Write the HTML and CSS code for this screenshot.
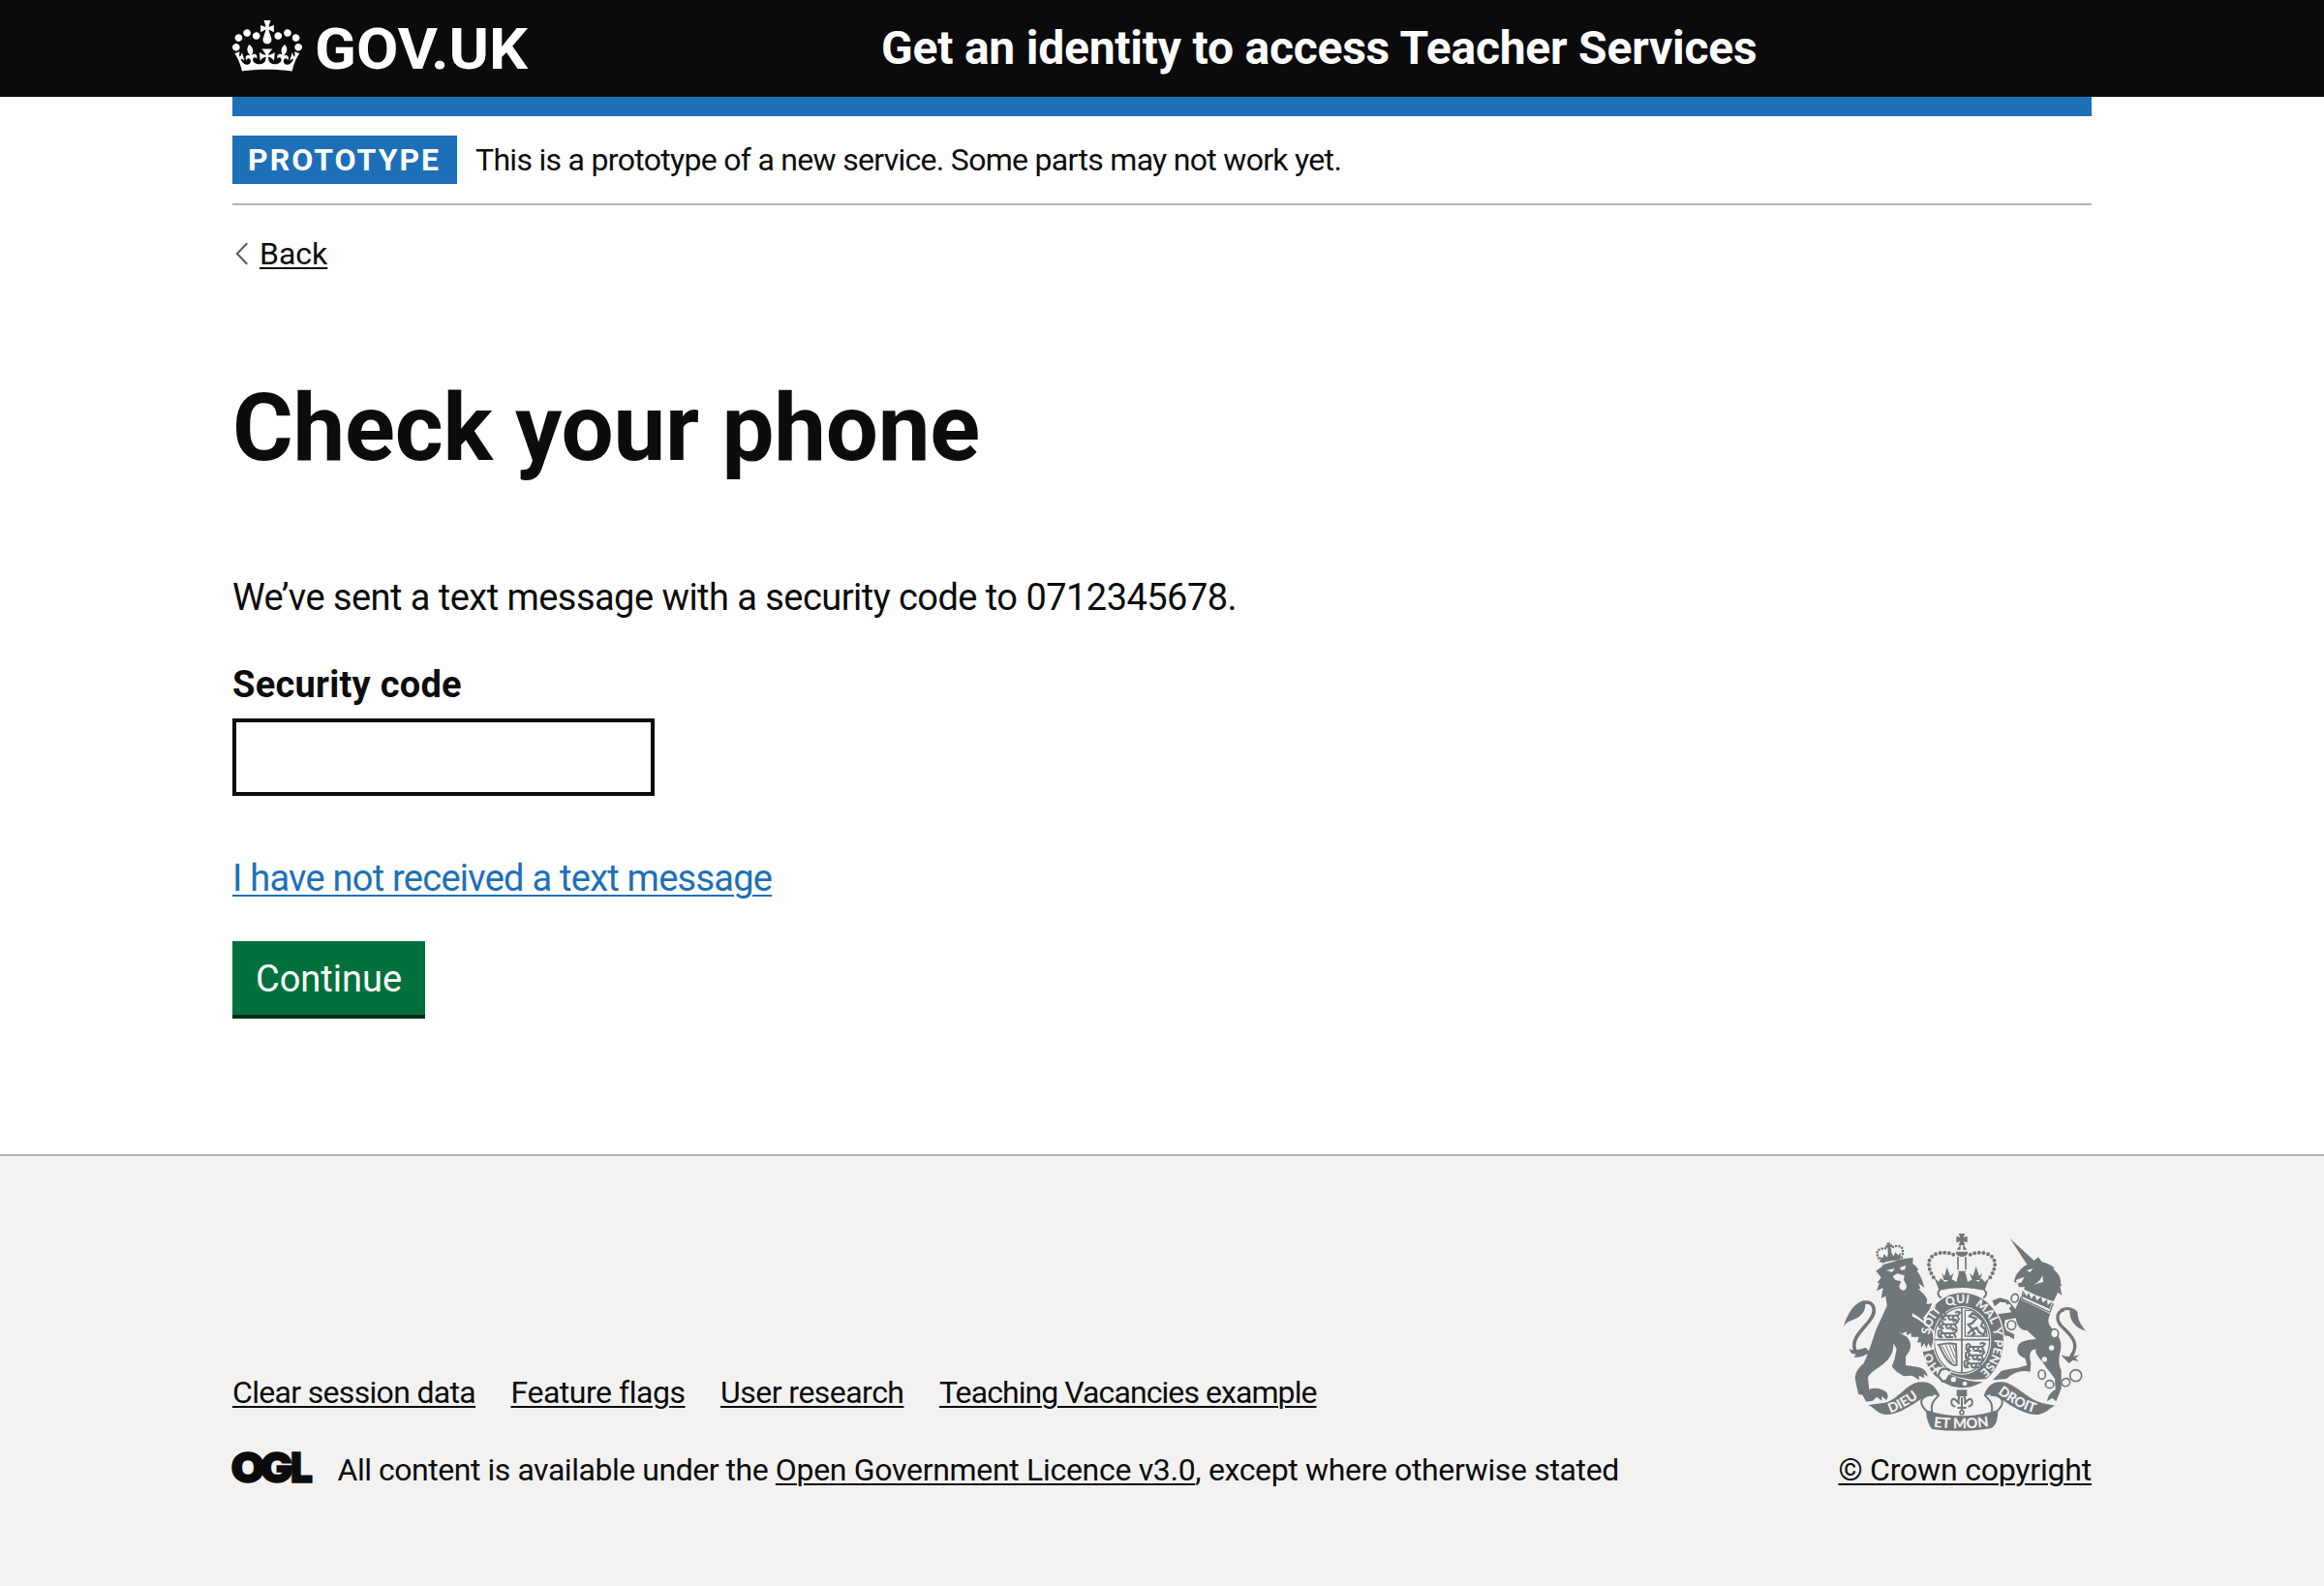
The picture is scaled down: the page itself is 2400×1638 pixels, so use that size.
FILE: index.html
```html
<!DOCTYPE html>
<html lang="en">
<head>
<meta charset="utf-8">
<title>Check your phone - Get an identity to access Teacher Services</title>
<link rel="stylesheet" href="styles.css">
</head>
<body>
<header class="header">
  <div class="container header-row">
    <a class="logo" href="#" aria-label="GOV.UK">
      <svg class="logo-crown" viewBox="0 0 132 97" width="72" height="53"><path fill="currentColor" fill-rule="evenodd" d="M25 30.2c3.5 1.5 7.7-.2 9.1-3.7 1.5-3.6-.2-7.8-3.9-9.2-3.6-1.4-7.6.3-9.1 3.9-1.4 3.5.3 7.5 3.9 9zM9 39.5c3.6 1.5 7.8-.2 9.2-3.7 1.5-3.6-.2-7.8-3.9-9.1-3.6-1.5-7.6.2-9.1 3.8-1.4 3.5.3 7.5 3.8 9zM4.4 57.2c3.5 1.5 7.7-.2 9.1-3.8 1.5-3.6-.2-7.7-3.9-9.1-3.5-1.5-7.6.3-9.1 3.8-1.4 3.5.3 7.6 3.9 9.1zm38.3-21.4c3.5 1.5 7.7-.2 9.1-3.8 1.5-3.6-.2-7.7-3.9-9.1-3.6-1.5-7.6.3-9.1 3.8-1.3 3.6.4 7.7 3.9 9.1zm64.4-5.6c-3.6 1.5-7.8-.2-9.1-3.7-1.5-3.6.2-7.8 3.8-9.2 3.6-1.4 7.7.3 9.2 3.9 1.3 3.5-.4 7.5-3.9 9zm15.9 9.3c-3.6 1.5-7.7-.2-9.1-3.7-1.5-3.6.2-7.8 3.7-9.1 3.6-1.5 7.7.2 9.2 3.8 1.5 3.5-.3 7.5-3.8 9zm4.7 17.7c-3.6 1.5-7.8-.2-9.2-3.8-1.5-3.6.2-7.7 3.9-9.1 3.6-1.5 7.7.3 9.2 3.8 1.3 3.5-.4 7.6-3.9 9.1zM89.3 35.8c-3.6 1.5-7.8-.2-9.2-3.8-1.4-3.6.2-7.7 3.9-9.1 3.6-1.5 7.7.3 9.2 3.8 1.4 3.6-.3 7.7-3.9 9.1zM69.7 17.7l8.9 4.7V9.3l-8.9 2.8c-.2-.3-.5-.6-.9-.9L72.4 0H59.6l3.5 11.2c-.3.3-.6.5-.9.9l-8.8-2.8v13.1l8.8-4.7c.3.3.6.7.9.9l-5 15.4v.1c-.2.8-.4 1.6-.4 2.4 0 4.1 3.1 7.5 7 8.1h.2c.3 0 .7.1 1 .1.4 0 .7 0 1-.1h.2c4-.6 7.1-4.1 7.1-8.1 0-.8-.1-1.7-.4-2.4V34l-5.1-15.4c.4-.2.7-.6 1-.9zM66 92.8c16.9 0 32.8 1.1 47.1 3.2 4-16.9 8.9-26.7 14-33.5l-9.6-3.4c1 4.9 1.1 7.2 0 10.2-1.5-1.4-3-4.3-4.2-8.7L108.6 76c2.8-2 5-3.2 7.5-3.3-4.4 9.4-10 11.9-13.6 11.2-4.3-.8-6.3-4.6-5.6-7.9 1-4.7 5.7-5.9 8-.5 4.3-8.7-3-11.4-7.6-8.8 7.1-7.2 7.9-13.5 2.1-21.1-8 6.1-8.1 12.3-4.5 20.8-4.7-5.4-12.1-2.5-9.5 6.2 3.4-5.2 7.9-2 7.2 3.1-.6 4.3-6.4 7.8-13.5 7.2-10.3-.9-10.9-8-11.2-13.8 2.5-.5 7.1 1.8 11 7.3L80.2 60c-4.1 4.4-8 5.3-12.3 5.4 1.4-4.4 8-11.6 8-11.6H55.5s6.4 7.2 7.9 11.6c-4.2-.1-8-1-12.3-5.4l1.4 16.4c3.9-5.5 8.5-7.7 10.9-7.3-.3 5.8-.9 12.8-11.1 13.8-7.2.6-12.9-2.9-13.5-7.2-.7-5 3.8-8.3 7.1-3.1 2.7-8.7-4.6-11.6-9.4-6.2 3.7-8.5 3.6-14.7-4.6-20.8-5.8 7.6-5 13.9 2.2 21.1-4.7-2.6-11.9.1-7.7 8.8 2.3-5.5 7.1-4.2 8.1.5.7 3.3-1.3 7.1-5.7 7.9-3.5.7-9-1.8-13.5-11.2 2.5.1 4.7 1.3 7.5 3.3l-4.7-15.4c-1.2 4.4-2.7 7.2-4.3 8.7-1.1-3-.9-5.3 0-10.2l-9.5 3.4c5 6.9 9.9 16.7 14 33.5 14.8-2.1 30.8-3.2 47.7-3.2z"/></svg>
      <svg class="logo-word" viewBox="0 0 230 79" width="230" height="79"><text x="1" y="51" textLength="220" lengthAdjust="spacingAndGlyphs">GOV.UK</text></svg>
    </a>
    <a class="service-name" href="#">Get an identity to access Teacher Services</a>
  </div>
</header>
<div class="container">
  <div class="blue-bar"></div>
  <div class="phase-banner">
    <strong class="tag">PROTOTYPE</strong>
    <span class="phase-text">This is a prototype of a new service. Some parts may not work yet.</span>
  </div>
  <a class="back" href="#">
    <svg class="chevron" viewBox="0 0 14 24" width="14" height="24"><path d="M12.2 1.2 1.8 12l10.4 10.8" fill="none" stroke="#505a5f" stroke-width="2"/></svg>
    <span class="back-text">Back</span>
  </a>
  <main class="main">
    <h1 class="heading">Check your phone</h1>
    <p class="body-text">We’ve sent a text message with a security code to 0712345678.</p>
    <label class="label" for="code">Security code</label>
    <input class="input" id="code" type="text">
    <p class="resend"><a class="link" href="#">I have not received a text message</a></p>
    <button class="button" type="button">Continue</button>
  </main>
</div>
<footer class="footer">
  <div class="container footer-row">
    <div class="footer-meta">
      <nav class="footer-links">
        <a class="fl fl-clear" href="#">Clear session data</a>
        <a class="fl fl-flags" href="#">Feature flags</a>
        <a class="fl fl-research" href="#">User research</a>
        <a class="fl fl-teaching" href="#">Teaching Vacancies example</a>
      </nav>
      <div class="licence">
        <svg class="ogl" viewBox="0 0 84 36" width="84" height="36"><text y="33.5"><tspan x="-1.5" textLength="35" lengthAdjust="spacingAndGlyphs">O</tspan><tspan x="28.5" textLength="34" lengthAdjust="spacingAndGlyphs">G</tspan><tspan x="60" textLength="23" lengthAdjust="spacingAndGlyphs">L</tspan></text></svg>
        <span class="licence-text"><span class="lt-a">All content is available under the </span><a class="lt-b" href="#">Open Government Licence v3.0</a><span class="lt-c">, except where otherwise stated</span></span>
      </div>
    </div>
    <a class="copyright" href="#">
      <svg class="arms" viewBox="72 69 750 615" width="250" height="205">
        <defs>
          <path id="garter" d="M438 519A101 116 0 0 1 438 287A101 116 0 0 1 438 519"/>
          <path id="dieu" d="M216 628Q266 612 318 568"/>
          <path id="mon" d="M350 671Q436 682 526 669"/>
          <path id="droit" d="M548 566Q602 610 664 628"/>
          <g id="passant" fill="none" stroke-width="6" stroke-linecap="round" stroke-linejoin="round">
            <path d="M4 20V8q0-6 8-5M12 12h34q12 0 14-8M14 12l-6 12h8M24 12l4 12h8M42 12l-4 12h10M52 12l6 12M12 3q6 4 4 10M48 2q6-4 14 1"/>
          </g>
        </defs>
        <g class="arms-fill">
          <!-- lion -->
          <path d="M172 188C195 168 238 150 287 147L286 166C296 172 300 178 304 186L298 186C308 200 316 214 322 240L304 226 310 244 302 242 322 262 331 276 329 291 346 288 338 308 318 334 352 374 350 398 343 425 336 412 332 430 324 414 314 430 311 410 303 412 305 394 293 395 296 384 282 394 280 380 268 388 266 376 254 382 243 378L268 392C284 412 284 430 264 452L264 480 300 485C316 488 330 496 332 515L320 507 322 520 305 512 306 526 284 512 258 514 236 500 221 484 229 463 236 430 226 412C228 450 206 470 176 490 158 502 148 512 147 520L151 555C166 548 186 552 200 560 210 568 212 578 204 588L190 576 190 590 174 578 162 590 142 593 130 572 118 570 112 545 107 520C108 500 120 486 134 474 148 446 158 412 172 370L206 296 202 266 188 272 194 240 174 250 182 226 176 224 188 208Z"/>
          <path d="M72 360C84 318 108 282 138 280 144 310 128 330 100 340 88 343 80 348 72 360Z"/>
          <path d="M88 430C104 438 122 430 140 425L154 440C134 452 118 456 104 456L110 446 96 443Z"/>
        </g>
        <g transform="rotate(-10 216 140)">
          <path class="arms-fill" d="M188 160l-6-22 10 6 6-12 8 12 4-10 2-10h8l2 10 4 10 8-12 6 12 10-6-6 22q-30-6-56 0z"/>
          <path class="arms-fill" d="M211 100h12l-2 7 6-1v9l-6-1 2 12h-12l2-12-6 1v-9l6 1z"/>
          <path class="arms-line" stroke-width="8" stroke-linecap="round" stroke-dasharray="0 10" d="M184 152C170 126 176 110 208 116M250 152C264 126 258 110 226 116"/>
          <path class="arms-line" stroke-width="4" d="M186 167q31-7 62 0"/>
        </g>
        <g class="arms-fill">
          <!-- unicorn -->
          <path d="M587 87 662 156 675 145 686 160C702 164 714 170 724 178L722 182C738 196 746 210 744 226L748 234 742 234 748 264 736 254 722 282 628 250 634 238 614 238 612 226 600 222C602 202 616 182 640 168Z"/>
          <path d="M620 268 712 322C702 340 704 356 724 372 742 394 748 410 744 434 738 454 736 474 746 496L746 552 730 592 718 582 702 592C704 576 714 562 728 556L726 522C712 500 700 490 688 470 670 450 664 440 668 430 652 432 644 442 652 474L650 500C620 494 600 502 576 522L534 526 560 498C586 490 612 490 640 480L634 458C612 452 606 436 612 420 620 402 646 402 668 398L640 372C618 374 606 352 606 334L572 340 570 356 576 372 600 384 600 400 584 390 562 386 546 350 548 322 592 316 586 306 574 286 556 284 540 298 532 280 556 271 582 278 604 306Z"/>
          <path d="M740 308C758 296 780 298 796 314 798 342 806 352 822 374 792 366 770 342 772 310Z"/>
          <path d="M744 448C762 456 784 454 802 448L790 458 800 468 782 464 770 474Z"/>
          <!-- crown -->
          <path d="M352 208 366 222 372 210 386 222 404 212 422 222 428 196 450 196 456 222 474 212 490 222 498 210 510 222 524 208 508 248Q438 232 368 248Z"/>
          <path d="M376 194 384 204 392 176 402 204 412 194 406 216 382 216ZM462 194 472 204 482 174 492 204 502 194 494 216 470 216ZM426 188h24l-6 14 10 12h-32l10-12z"/>
          <path d="M428 72h20l-5 12 12-4v20l-12-4 5 12h-20l5-12-12 4V80l12 4zM419 128h38q0 14-19 16-19-2-19-16zM422 122l12-16v16zM442 106l12 16h-12z"/>
        </g>
        <g class="arms-line">
          <path stroke-width="11" d="M132 286C164 280 178 308 152 342 128 374 90 400 110 440"/>
          <path stroke-width="10" d="M756 308C730 314 726 342 754 366 786 396 802 420 774 456"/>
          <path stroke-width="5" d="M426 144v40M450 144v40"/>
          <path stroke-width="12" stroke-linecap="round" stroke-dasharray="0 14" d="M350 208C330 174 328 146 362 134 388 126 410 136 422 142M526 208C546 174 548 146 514 134 488 126 466 136 454 142"/>
          <path stroke-width="6" d="M370 246Q356 258 374 272M506 246Q522 258 504 272"/>
        </g>
        <!-- collar and cutouts -->
        <path class="arms-bg" d="M628 244 724 290 712 320 620 276Z"/>
        <path class="arms-fill" d="M630 252l8 14 8-10 6 18 12-12 6 18 14-12 4 18 14-10 2 18 14-12-8 24-84-38z"/>
        <path class="arms-line" stroke-width="4" d="M628 250l-5 24 88 42 10-28"/>
        <path class="arms-bg" d="M204 186l26-6-8 12zM246 178l18-8-2 14-12 2zM224 204l14-8 22 6-2 14 8 14q2 18-10 18-12-2-12-14l6-14-18-4zM638 186l20-6-8 12zM606 216l26-10-10 18-14 2zM688 202Q676 232 640 236L690 222Z"/>
        <g class="arms-line arms-spots" stroke-width="5">
          <ellipse cx="602" cy="272" rx="11" ry="13" transform="rotate(20 602 272)"/><ellipse cx="592" cy="356" rx="13" ry="14"/><ellipse cx="725" cy="382" rx="12" ry="14"/><ellipse cx="686" cy="509" rx="11" ry="14"/><ellipse cx="710" cy="539" rx="13" ry="12"/><ellipse cx="760" cy="533" rx="13" ry="12" transform="rotate(-30 760 533)"/><circle cx="791" cy="512" r="18"/>
        </g>
        <g class="arms-bg"><circle cx="694" cy="462" r="8"/><circle cx="716" cy="426" r="8"/><circle cx="584" cy="296" r="6"/></g>
        <!-- garter and shield -->
        <ellipse class="arms-bg" cx="440" cy="403" rx="131" ry="151"/>
        <ellipse class="arms-fill" cx="440" cy="403" rx="127" ry="147"/>
        <ellipse class="arms-bg" cx="438" cy="403" rx="91" ry="106"/>
        <ellipse class="arms-line" cx="438" cy="403" rx="86" ry="101" stroke-width="4"/>
        <path class="arms-line" stroke-width="5" d="M438 300v204M350 401h176"/>
        <g class="arms-line">
          <use href="#passant" x="371" y="314"/><use href="#passant" x="364" y="341"/><use href="#passant" x="361" y="369"/>
          <use href="#passant" x="448" y="411"/><use href="#passant" x="446" y="437"/><use href="#passant" x="442" y="463"/>
          <path stroke-width="4" d="M448 310h22Q512 330 516 390H448Z"/>
          <path stroke-width="7" d="M456 384l14-16-12-14 12-4 12-14-20-8 10-10 18 12 14 12-6 16 14 12-6 16-14-8-8-14-14 6 8 12-10 6"/>
          <path stroke-width="6" d="M366 417q30-8 54-2l2 64q-24 8-54-60z"/>
          <path stroke-width="3" d="M376 420l32 56M388 418l26 56M400 417l16 40M410 417l8 22"/>
        </g>
        <path class="arms-bg" d="M284 318Q326 342 354 378L352 430 334 436 300 440 290 370Z"/>
        <path class="arms-fill" d="M280 326Q324 346 347 378L350 400 343 428 334 412 328 428 322 412 312 426 311 408 300 410 305 392 286 392Z"/>
        <path class="arms-bg" d="M360 490q22-14 46 8l-4 10q50 22 116 14l-10 10q-60 0-110-24l-16 26q-26-4-22-44z"/>
        <path class="arms-line" stroke-width="7" d="M402 498q-16-14-30-2l-8 16 14 18 16-2"/>
        <g class="arms-bg"><circle cx="412" cy="524" r="8"/><circle cx="447" cy="537" r="7"/></g>
        <!-- motto scroll -->
        <path class="arms-fill" d="M148 603 200 596C240 588 262 540 306 532 342 528 360 548 370 576L348 570C340 570 330 572 322 578 276 608 240 634 200 633 176 628 166 612 148 603Z"/>
        <path class="arms-fill" d="M726 605 690 598C640 586 606 538 566 532 530 528 514 548 506 576L528 570C540 570 550 576 560 584 600 614 640 634 674 633 700 628 708 614 726 605Z"/>
        <path class="arms-fill" d="M326 618Q436 656 550 618 550 668 526 676 436 690 346 678 330 662 326 618Z"/>
        <path class="arms-line" stroke-width="6" d="M328 622C300 594 312 572 350 572M368 572C350 590 340 600 346 626M548 622C576 594 564 572 526 572M508 572C526 590 536 600 530 626"/>
        <path class="arms-fill" d="M422 556h32v20h-32z"/>
        <path class="arms-line" stroke-width="6" d="M438 566Q422 584 430 600 410 574 406 592 404 606 418 608M438 566Q454 584 446 600 466 574 470 592 472 606 458 608M424 612h28M438 580v40"/>
        <circle class="arms-line" cx="438" cy="626" r="6" stroke-width="5"/>
        <g class="motto">
          <text><textPath href="#garter" startOffset="11%">HO</textPath></text>
          <text><textPath href="#garter" startOffset="27.5%">SOIT</textPath></text>
          <text><textPath href="#garter" startOffset="43%">QUI</textPath></text>
          <text><textPath href="#garter" startOffset="56%">MAL</textPath></text>
          <text><textPath href="#garter" startOffset="69.5%">Y</textPath></text>
          <text><textPath href="#garter" startOffset="74.5%">PENSE</textPath></text>
          <text class="motto-big"><textPath href="#dieu">DIEU</textPath></text>
          <text class="motto-big motto-mon"><textPath href="#mon">ET MON</textPath></text>
          <text class="motto-big"><textPath href="#droit">DROIT</textPath></text>
        </g>
      </svg>
      <span class="copyright-text">© Crown copyright</span>
    </a>
  </div>
</footer>
</body>
</html>
```
FILE: styles.css
```css
* { box-sizing: border-box; }
body {
  margin: 0;
  background: #fff;
  color: #0b0c0c;
  font-family: Roboto, "Liberation Sans", sans-serif;
  font-size: 32px;
  line-height: 40px;
}
a { color: inherit; text-underline-offset: 3px; text-decoration-thickness: 2px; }
h1, p { margin: 0; }
svg { overflow: visible; }
.container { width: 1920px; margin: 0 auto; }

.header { height: 100px; background: #0b0b0d; color: #fff; }
.header-row { display: flex; height: 100px; }
.logo { display: flex; align-items: flex-start; width: 670px; padding-top: 21px; text-decoration: none; }
.logo-crown { flex: none; }
.logo-word { flex: none; margin-left: 12px; margin-top: -1px; }
.logo-word text { fill: currentColor; font-size: 59px; font-weight: 700; }
.service-name {
  font-size: 48px;
  font-weight: 700;
  line-height: 100px;
  letter-spacing: -0.23px;
  text-decoration: none;
  white-space: nowrap;
}

.blue-bar { height: 20px; background: #1d70b8; }
.phase-banner {
  display: flex;
  align-items: center;
  height: 92px;
  gap: 20px;
  border-bottom: 2px solid #b1b4b6;
}
.tag {
  width: 232px;
  height: 50px;
  padding-left: 16px;
  background: #1d70b8;
  color: #fff;
  font-weight: 700;
  line-height: 51px;
  letter-spacing: 2px;
}
.phase-text { margin-left: -1px; letter-spacing: -0.7px; }

.back { display: flex; align-items: center; gap: 11px; width: max-content; margin-top: 30px; padding-left: 3px; text-decoration: none; }
.chevron { flex: none; }
.back-text { text-decoration: underline; text-decoration-thickness: 2px; text-underline-offset: 3px; }

.main { display: flex; flex-direction: column; align-items: flex-start; padding: 110px 0 140px; font-size: 38px; line-height: 50px; }
.heading { margin-bottom: 100px; font-size: 96px; font-weight: 700; line-height: 100px; letter-spacing: -0.25px; }
.body-text { margin-bottom: 40px; letter-spacing: -0.54px; }
.label { margin-bottom: 10px; font-weight: 700; letter-spacing: 0.25px; }
.input { width: 436px; height: 80px; padding: 10px; border: 4px solid #0b0c0c; border-radius: 0; background: #fff; font: inherit; }
.resend { margin: 60px 0 40px; }
.link { color: #1d70b8; letter-spacing: -0.75px; text-underline-offset: 4px; }
.button {
  width: 199px;
  height: 76px;
  margin-bottom: 4px;
  padding: 2px 0 0;
  border: 0;
  background: #00703c;
  box-shadow: 0 4px 0 #002d18;
  color: #fff;
  font: inherit;
}

.footer { height: 446px; padding-top: 79px; border-top: 2px solid #b1b4b6; background: #f3f2f1; }
.footer-row { display: flex; justify-content: space-between; align-items: flex-end; }
.footer-links { display: flex; gap: 36.5px; margin-bottom: 40px; }
.fl { white-space: nowrap; }
.fl-clear { letter-spacing: -0.68px; }
.fl-flags { letter-spacing: -0.47px; }
.fl-research { letter-spacing: -0.53px; }
.fl-teaching { letter-spacing: -0.92px; }
.licence { display: flex; height: 40px; }
.ogl { flex: none; margin: -1px 24.5px 0 0; }
.ogl text { fill: #0b0c0c; stroke: #0b0c0c; stroke-width: 1.5px; font-family: Inter, sans-serif; font-size: 43px; font-weight: 900; }
.licence-text { white-space: pre; }
.lt-a { letter-spacing: -0.46px; }
.lt-b { letter-spacing: -0.31px; }
.lt-c { letter-spacing: -0.35px; }

.copyright { display: flex; flex-direction: column; align-items: center; gap: 20px; text-decoration: none; }
.copyright-text { letter-spacing: -0.2px; text-decoration: underline; text-decoration-thickness: 2px; text-underline-offset: 3px; white-space: nowrap; }
.arms-fill { fill: #6f777b; }
.arms-line { fill: none; stroke: #6f777b; }
.arms-bg { fill: #f3f2f1; }
.arms-spots { fill: #f3f2f1; }
.motto { fill: #f3f2f1; font-family: Lato, sans-serif; font-size: 37px; font-weight: 900; }
.motto-big { font-size: 42px; }
.motto-mon { font-size: 44px; }
```
